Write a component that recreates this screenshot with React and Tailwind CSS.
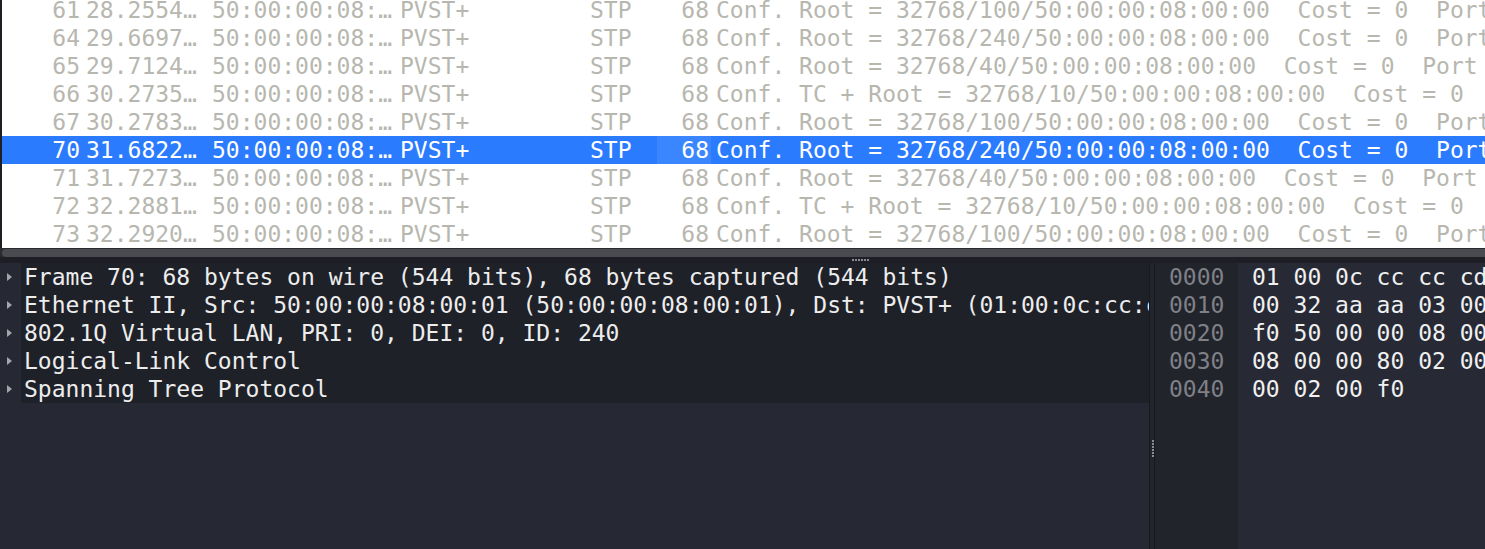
const mono = { fontFamily: '"DejaVu Sans Mono", "Liberation Mono", monospace' };

const packets = [
  { no: 61, time: "28.2554…", info: "Conf. Root = 32768/100/50:00:00:08:00:00  Cost = 0  Port = 0x8001" },
  { no: 64, time: "29.6697…", info: "Conf. Root = 32768/240/50:00:00:08:00:00  Cost = 0  Port = 0x8001" },
  { no: 65, time: "29.7124…", info: "Conf. Root = 32768/40/50:00:00:08:00:00  Cost = 0  Port = 0x8001" },
  { no: 66, time: "30.2735…", info: "Conf. TC + Root = 32768/10/50:00:00:08:00:00  Cost = 0  Port = 0x8001" },
  { no: 67, time: "30.2783…", info: "Conf. Root = 32768/100/50:00:00:08:00:00  Cost = 0  Port = 0x8001" },
  { no: 70, time: "31.6822…", info: "Conf. Root = 32768/240/50:00:00:08:00:00  Cost = 0  Port = 0x8001", selected: true },
  { no: 71, time: "31.7273…", info: "Conf. Root = 32768/40/50:00:00:08:00:00  Cost = 0  Port = 0x8001" },
  { no: 72, time: "32.2881…", info: "Conf. TC + Root = 32768/10/50:00:00:08:00:00  Cost = 0  Port = 0x8001" },
  { no: 73, time: "32.2920…", info: "Conf. Root = 32768/100/50:00:00:08:00:00  Cost = 0  Port = 0x8001" },
];

const tree = [
  "Frame 70: 68 bytes on wire (544 bits), 68 bytes captured (544 bits)",
  "Ethernet II, Src: 50:00:00:08:00:01 (50:00:00:08:00:01), Dst: PVST+ (01:00:0c:cc:cc:cd)",
  "802.1Q Virtual LAN, PRI: 0, DEI: 0, ID: 240",
  "Logical-Link Control",
  "Spanning Tree Protocol",
];

const hex = [
  ["0000", "01 00 0c cc cc cd 50 00 00 08 00 01 81 00 00 f0"],
  ["0010", "00 32 aa aa 03 00 00 0c 01 0b 00 00 00 00 00 80"],
  ["0020", "f0 50 00 00 08 00 00 00 00 00 80 f0 50 00 00 08"],
  ["0030", "08 00 00 80 02 00 14 00 02 00 0f 00 00 00 00 00"],
  ["0040", "00 02 00 f0"],
];

function PacketRow({ p }) {
  const sel = p.selected;
  return (
    <div className={`flex h-[28px] items-center whitespace-pre ${sel ? "bg-[#2b7bff] text-white" : "text-[#b7b7af]"}`}>
      <div className="w-[80px] shrink-0 text-right pr-[2px]">{p.no}</div>
      <div className="w-[124px] shrink-0 pl-[4px]">{p.time}</div>
      <div className="w-[190px] shrink-0 pl-[6px]">50:00:00:08:…</div>
      <div className="w-[190px] shrink-0 pl-[4px]">PVST+</div>
      <div className="w-[71px] shrink-0 pl-[4px]">STP</div>
      <div className={`w-[54px] h-full flex items-center justify-end shrink-0 pr-[2px] ${sel ? "bg-[#3a86ff]" : ""}`}>68</div>
      <div className="flex-1 pl-[5px] overflow-hidden">{p.info}</div>
    </div>
  );
}

function Dots({ vertical }) {
  return (
    <div className={`flex ${vertical ? "flex-col" : ""} gap-[1px]`}>
      {[0, 1, 2, 3, 4, 5].map(i => (
        <div key={i} className="w-[2px] h-[2px] bg-[#8a8c92]" />
      ))}
    </div>
  );
}

export default function App() {
  return (
    <div className="w-[1485px] h-[549px] overflow-hidden bg-[#1d1f25] flex flex-col text-[23px]" style={mono}>
      {/* packet list */}
      <div className="h-[248px] ml-[2px] bg-white overflow-hidden shrink-0">
        <div className="mt-[-4px]">
          {packets.map(p => <PacketRow key={p.no} p={p} />)}
        </div>
      </div>

      {/* horizontal scrollbar */}
      <div className="h-[9px] pt-[1px] pl-[2px] shrink-0 bg-[#2a2b30]">
        <div className="h-[8px] bg-[#4a4b50] rounded-l-[4px]" />
      </div>
      {/* splitter */}
      <div className="h-[6px] shrink-0 flex items-center pl-[852px] bg-[#1d1f25]">
        <Dots />
      </div>

      {/* details + bytes */}
      <div className="flex-1 flex min-h-0">
        <div className="w-[1149px] shrink-0 bg-[#262833] overflow-hidden">
          {tree.map(t => (
            <div key={t} className="flex h-[28px]">
              <div className="w-[21px] shrink-0 flex items-center pl-[7px]">
                <svg width="5" height="8" viewBox="0 0 5 8"><path d="M0 0 L5 4 L0 8 Z" fill="#a3a5ab" /></svg>
              </div>
              <div className="flex-1 bg-[#1f2129] text-[#ededed] pl-[3px] flex items-center whitespace-pre overflow-hidden">{t}</div>
            </div>
          ))}
        </div>

        <div className="w-[6px] shrink-0 flex border-x border-[#17191e] bg-[#23252d] pt-[177px] pl-[2px]">
          <Dots vertical />
        </div>

        <div className="flex-1 flex overflow-hidden">
          <div className="w-[83px] shrink-0 bg-[#22242c] text-[#7f8187] pl-[14px]">
            {hex.map(([o]) => <div key={o} className="h-[28px] flex items-center">{o}</div>)}
          </div>
          <div className="flex-1 bg-[#272a35] text-[#f0f0f0] pl-[14px] overflow-hidden">
            {hex.map(([o, b]) => <div key={o} className="h-[28px] flex items-center whitespace-pre">{b}</div>)}
          </div>
        </div>
      </div>
    </div>
  );
}
